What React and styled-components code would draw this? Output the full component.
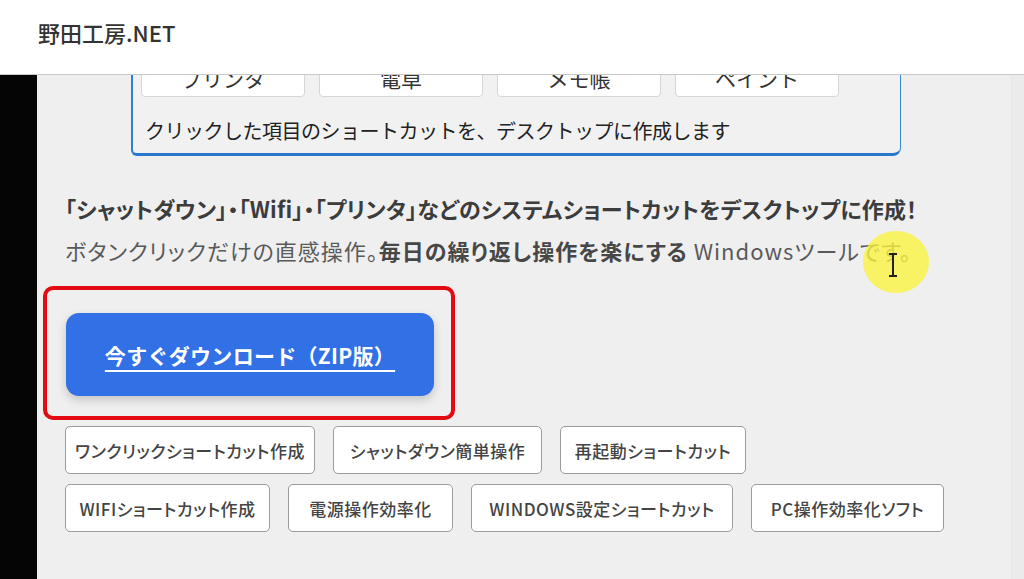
import React from 'react';
import styled, { createGlobalStyle } from 'styled-components';

const GlobalStyle = createGlobalStyle`
  html, body {
    margin: 0;
    padding: 0;
    background: #efefef;
    font-family: 'Noto Sans CJK JP', 'Noto Sans', sans-serif;
  }
`;

const Page = styled.div`
  width: 1024px;
  height: 579px;
  display: flex;
  flex-direction: column;
  overflow: hidden;
`;

const Header = styled.header`
  height: 75px;
  flex-shrink: 0;
  background: #ffffff;
  border-bottom: 1px solid #c9c9c9;
  padding: 18px 0 0 38px;
  box-sizing: border-box;
`;

const SiteTitle = styled.div`
  font-size: 22px;
  line-height: 28px;
  font-weight: 500;
  color: #333;
`;

const Body = styled.div`
  flex: 1;
  display: flex;
`;

const Sidebar = styled.div`
  width: 37px;
  background: #050505;
`;

const Main = styled.main`
  flex: 1;
  position: relative;
  padding-left: 28px;
  background: #efefef;
`;

const RightEdge = styled.div`
  width: 12px;
  background: #ebebeb;
  border-left: 1px solid #e6e6e6;
`;

const Shot = styled.div`
  margin-left: 66px;
  width: 770px;
  height: 81px;
  box-sizing: border-box;
  overflow: hidden;
  background: #f1f1f1;
  border-left: 2px solid #2f7fd0;
  border-right: 1px solid #3a86d2;
  border-bottom: 3px solid #2a78cc;
  border-bottom-left-radius: 6px;
  border-bottom-right-radius: 8px;
  padding-left: 8px;
`;

const KeyRow = styled.div`
  display: flex;
  gap: 14px;
  margin-top: -17px;
`;

const Key = styled.div`
  width: 164px;
  height: 39px;
  box-sizing: border-box;
  background: #fff;
  border: 1px solid #d6d6d6;
  border-radius: 4px;
  display: flex;
  align-items: center;
  justify-content: center;
  font-size: 21px;
  color: #333;
  white-space: nowrap;
`;

const Caption = styled.div`
  margin-top: 19px;
  padding-left: 4px;
  font-size: 20px;
  line-height: 30px;
  color: #222;
  letter-spacing: -0.5px;
`;

const Lead = styled.p`
  margin: 31px 0 0;
  font-size: 22px;
  line-height: 42px;
  color: #5a5a5a;
  white-space: nowrap;
  font-feature-settings: 'palt';
`;

const LeadLine = styled.span`
  display: block;
  letter-spacing: ${({ $spacing }) => $spacing}px;
`;

const Strong = styled.span`
  font-weight: 700;
  color: ${({ $tone }) => $tone || '#474747'};
`;

const Callout = styled.div`
  margin: 15px 0 0 -22px;
  width: 412px;
  height: 134px;
  box-sizing: border-box;
  border: 4px solid #e40a12;
  border-radius: 10px;
  padding: 23px 17px 20px 19px;
`;

const DownloadButton = styled.a`
  display: flex;
  align-items: center;
  justify-content: center;
  width: 368px;
  height: 83px;
  border-radius: 13px;
  background: #3270e6;
  color: #fff;
  font-size: 21px;
  font-weight: 600;
  letter-spacing: 0.3px;
  text-decoration: underline;
  text-underline-offset: 6px;
  text-decoration-thickness: 2px;
  box-shadow: 0 4px 10px rgba(0, 0, 0, 0.18);
  cursor: pointer;
`;

const Tags = styled.div`
  margin-top: 6px;
  width: 900px;
  display: flex;
  flex-wrap: wrap;
  column-gap: 18px;
  row-gap: 10px;
`;

const Tag = styled.span`
  width: ${({ $w }) => $w}px;
  height: 48px;
  box-sizing: border-box;
  display: inline-flex;
  align-items: center;
  justify-content: center;
  background: #fff;
  border: 1px solid #9c9c9c;
  border-radius: 5px;
  font-size: 17px;
  font-weight: 500;
  color: #444;
  white-space: nowrap;
  font-feature-settings: 'palt';
  letter-spacing: 0.5px;
`;

const Highlight = styled.div`
  position: absolute;
  left: 826px;
  top: 156px;
  width: 66px;
  height: 62px;
  border-radius: 50%;
  background: rgba(248, 244, 60, 0.78);
  pointer-events: none;
`;

const Cursor = styled.svg`
  position: absolute;
  left: 850px;
  top: 178px;
`;

const keys = ['プリンタ', '電卓', 'メモ帳', 'ペイント'];
const tags = [
  ['ワンクリックショートカット作成', 250],
  ['シャットダウン簡単操作', 209],
  ['再起動ショートカット', 186],
  ['WIFIショートカット作成', 205],
  ['電源操作効率化', 165],
  ['WINDOWS設定ショートカット', 262],
  ['PC操作効率化ソフト', 193],
];

export default function App() {
  return (
    <Page>
      <GlobalStyle />
      <Header>
        <SiteTitle>野田工房.NET</SiteTitle>
      </Header>
      <Body>
        <Sidebar />
        <Main>
          <Shot>
            <KeyRow>
              {keys.map((k) => (
                <Key key={k}>{k}</Key>
              ))}
            </KeyRow>
            <Caption>クリックした項目のショートカットを、デスクトップに作成します</Caption>
          </Shot>
          <Lead>
            <LeadLine $spacing={0.2}>
              <Strong $tone="#3c3c3c">
                「シャットダウン」・「Wifi」・「プリンタ」などのシステムショートカットをデスクトップに作成！
              </Strong>
            </LeadLine>
            <LeadLine $spacing={1}>
              ボタンクリックだけの直感操作。<Strong>毎日の繰り返し操作を楽にする</Strong> Windowsツールです。
            </LeadLine>
          </Lead>
          <Callout>
            <DownloadButton>今すぐダウンロード（ZIP版）</DownloadButton>
          </Callout>
          <Tags>
            {tags.map(([t, w]) => (
              <Tag key={t} $w={w}>
                {t}
              </Tag>
            ))}
          </Tags>
          <Highlight />
          <Cursor width="12" height="24" viewBox="0 0 12 24">
            <path d="M2 1h8M6 1v22M2 23h8" stroke="#222" strokeWidth="2" fill="none" />
          </Cursor>
        </Main>
        <RightEdge />
      </Body>
    </Page>
  );
}
